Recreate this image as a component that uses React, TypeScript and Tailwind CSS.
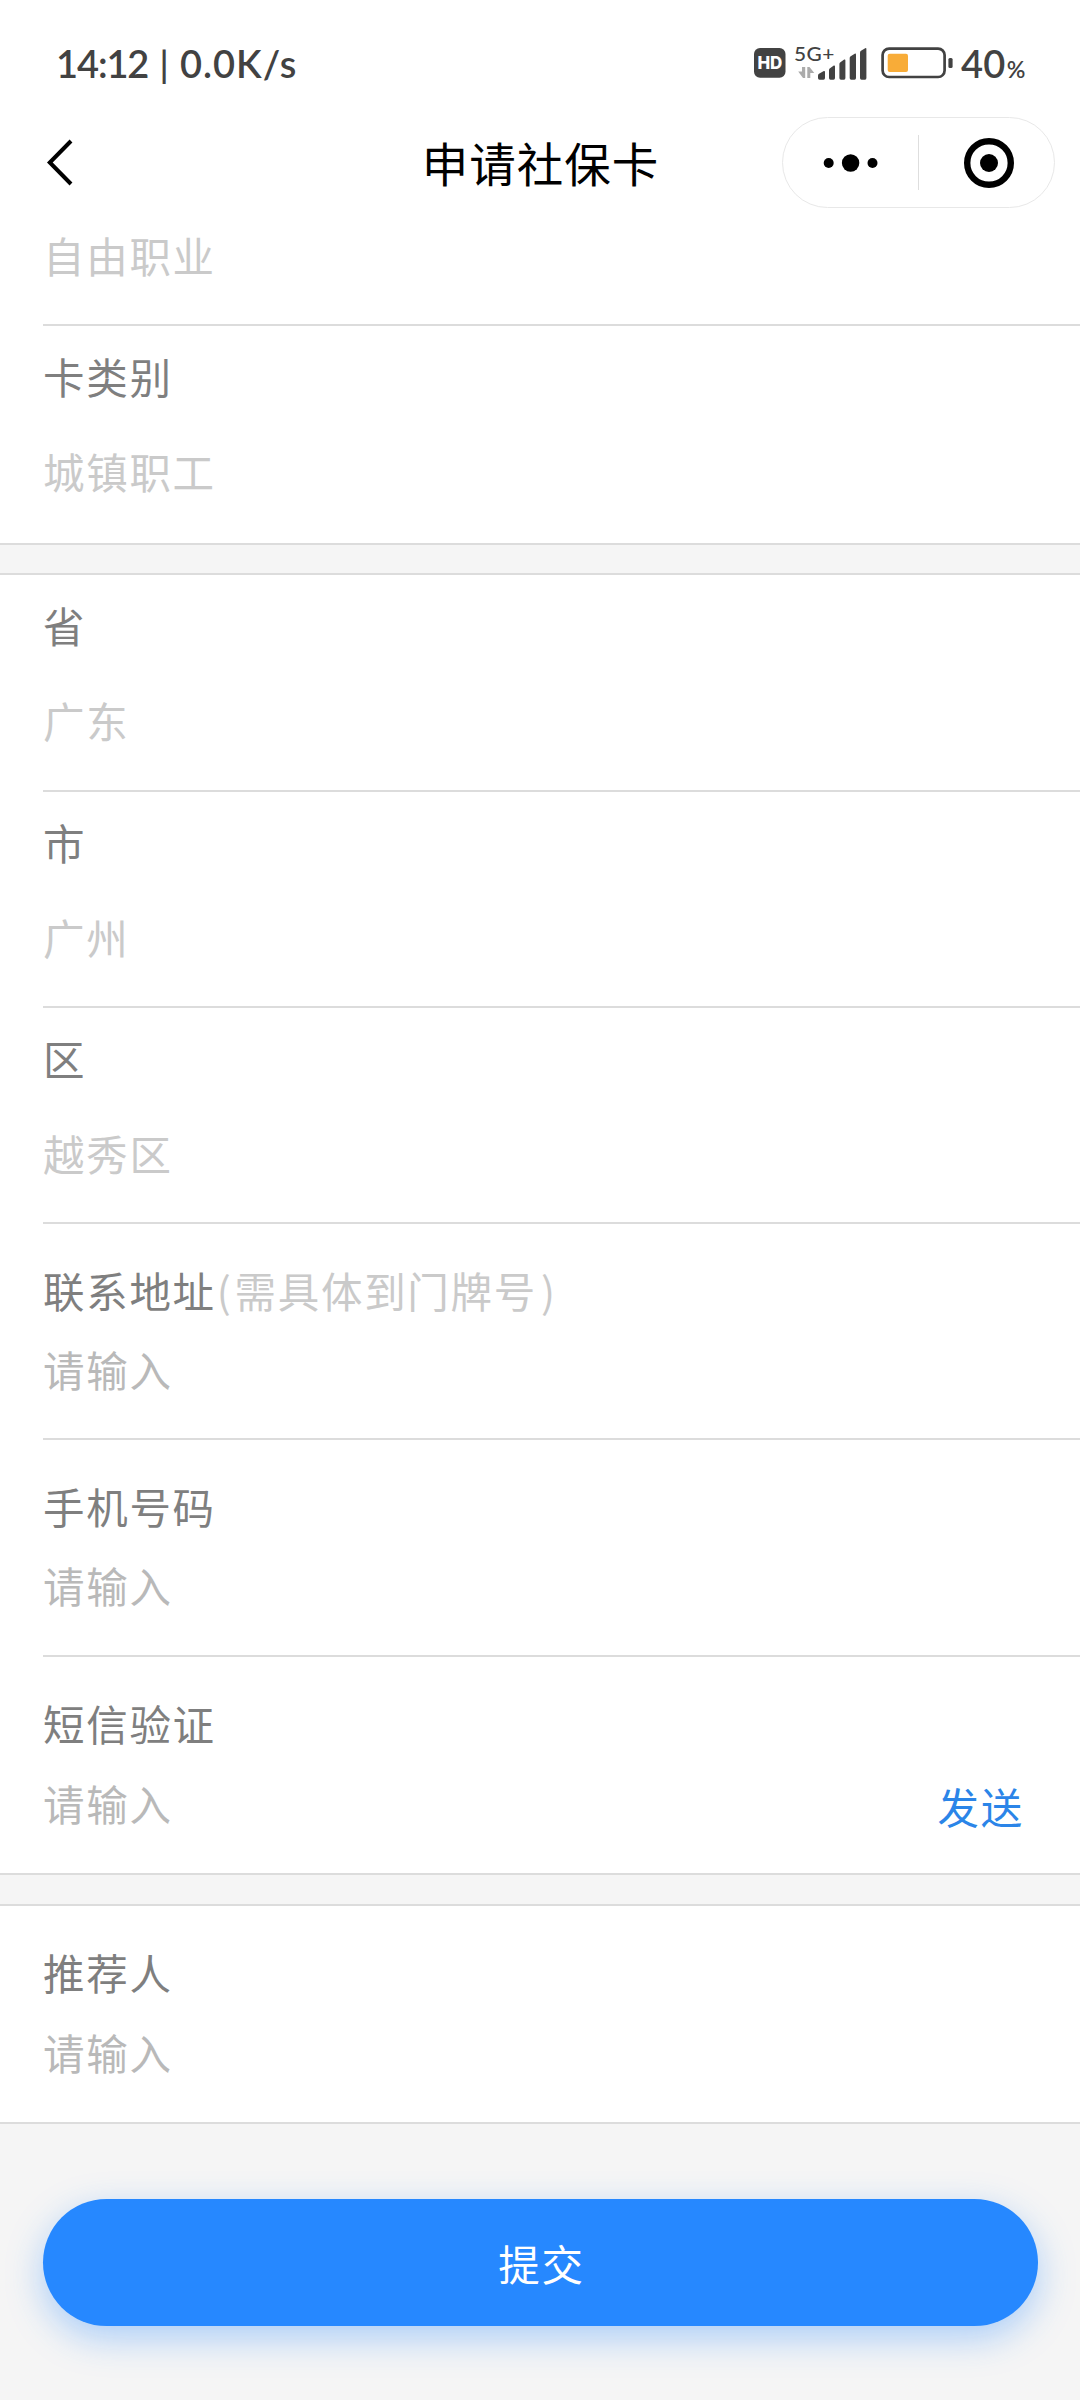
type Field = {
  label: string;
  hint?: string;
  value?: string;
  action?: string;
  height: string;
};

const CARD_FIELDS: Field[] = [{ label: "卡类别", value: "城镇职工", height: "h-[217px]" }];

const ADDRESS_FIELDS: Field[] = [
  { label: "省", value: "广东", height: "h-[215px]" },
  { label: "市", value: "广州", height: "h-[214px]" },
  { label: "区", value: "越秀区", height: "h-[214px]" },
  { label: "联系地址", hint: "需具体到门牌号", height: "h-[214px]" },
  { label: "手机号码", height: "h-[215px]" },
  { label: "短信验证", action: "发送", height: "h-[216px]" },
];

const REFERRER_FIELDS: Field[] = [{ label: "推荐人", height: "h-[216px]" }];

function StatusIcons() {
  return (
    <svg width="204" height="40" viewBox="750 42 204 40" className="block">
      {/* HD */}
      <rect x="754" y="48" width="31.5" height="29.7" rx="6" fill="#424242" />
      <text x="757.4" y="69.4" fontSize="17.5" fontWeight="800" fill="#fff" fontFamily="Inter, sans-serif" letterSpacing="0" textLength="25" lengthAdjust="spacingAndGlyphs">HD</text>

      {/* network */}
      <text x="794" y="60.5" fontSize="20" fontWeight="500" fill="#424242" fontFamily="Lato, sans-serif" letterSpacing="0.5" textLength="41" lengthAdjust="spacingAndGlyphs">5G+</text>
      <g fill="#ababab">
        <path d="M802 67h3.2v11h-2.2l-4.8-6.5h3.8z" />
        <path d="M807.3 78h3v-5h4l-4.8-6h-2.2z" />
      </g>
      <g fill="#424242">
        <path d="M818 75.5Q818 74.5 819 73.8L823.8 71Q825 70.5 825 72V78Q825 79.7 823.5 79.7H819.5Q818 79.7 818 78Z" />
        <path d="M829 70Q829 69 830 68.3L833.8 65.5Q835 65 835 66.5V78Q835 79.7 833.5 79.7H830.5Q829 79.7 829 78Z" />
        <path d="M839.4 64Q839.4 63 840.4 62.3L844.2 59.6Q845.4 59 845.4 60.5V78Q845.4 79.7 844 79.7H841Q839.4 79.7 839.4 78Z" />
        <path d="M849.7 58Q849.7 57 850.7 56.3L854.7 53.7Q856 53 856 54.5V78Q856 79.7 854.5 79.7H851.2Q849.7 79.7 849.7 78Z" />
        <path d="M860 52.5Q860 51.5 861 50.7L865.2 48.2Q866.4 47.7 866.4 49V78Q866.4 79.7 865 79.7H861.5Q860 79.7 860 78Z" />
      </g>

      {/* battery */}
      <rect x="882.6" y="48.6" width="62" height="28.4" rx="6.5" fill="none" stroke="#424242" strokeWidth="2.7" />
      <rect x="887.7" y="53.8" width="20.3" height="18.2" rx="2" fill="#f8ac38" />
      <rect x="948.4" y="58" width="4.2" height="10" rx="1.5" fill="#424242" />
    </svg>
  );
}

function StatusBar() {
  return (
    <div className="flex h-[115px] items-start justify-between pl-[56px] pr-[54px] pt-[42px] font-['Lato',sans-serif] text-[#424242]">
      <div className="flex items-baseline text-[38px] font-semibold leading-[43px]">
        <span className="w-[99px] tracking-[-1.1px]">14:12</span>
        <span className="w-[18px] text-center text-[36px] tracking-normal">|</span>
        <span className="ml-[7px] tracking-[1px]">0.0K/s</span>
      </div>
      <div className="flex items-start">
        <StatusIcons />
        <div className="flex w-[72px] items-baseline pl-[7px] leading-[43px]">
          <span className="text-[38px] font-semibold tracking-[0.3px]">40</span>
          <span className="ml-[1px] text-[23px] font-semibold tracking-normal">%</span>
        </div>
      </div>
    </div>
  );
}

function NavBar() {
  return (
    <header className="grid h-[92px] grid-cols-[400px_280px_400px] items-start">
      <svg width="80" height="92" viewBox="0 115 80 92" className="block">
        <path d="M71 141 49.8 162.5 71 184" fill="none" stroke="#000" strokeWidth="4" />
      </svg>
      <h1 className="pt-[17px] pl-[1px] text-center text-[46.5px] font-normal leading-[60px] tracking-[1px] whitespace-nowrap text-black">申请社保卡</h1>
      <div className="mt-[2px] ml-[102px] flex h-[91px] w-[273px] items-center rounded-full border border-[#e8e8e8]">
        <svg width="135" height="60" viewBox="0 0 135 60">
          <circle cx="45.7" cy="30" r="5" />
          <circle cx="67.6" cy="30" r="8.7" />
          <circle cx="89.5" cy="30" r="5" />
        </svg>
        <div className="h-[55px] w-px bg-[#dedede]" />
        <svg width="135" height="60" viewBox="0 0 135 60">
          <circle cx="70" cy="30" r="21.8" fill="none" stroke="#000" strokeWidth="6.4" />
          <circle cx="70" cy="30" r="9" />
        </svg>
      </div>
    </header>
  );
}

function FieldRow({ field, last }: { field: Field; last: boolean }) {
  return (
    <div className={last ? "" : "ml-[43px] border-b-2 border-[#dcdcdc]"}>
      <div className={`flex flex-col leading-[60px] ${field.height} ${last ? "pl-[43px]" : ""} ${field.value ? "gap-[35px] pt-[20px]" : last ? "gap-[20px] pt-[36px]" : "gap-[19px] pt-[36px]"}`}>
        <div className="text-[#7f7f7f]">
          {field.label}
          {field.hint && (
            <span className="text-[#cacaca]">
              <span className="ml-[1px] mr-[2px]">(</span>
              {field.hint}
              <span className="ml-[4px]">)</span>
            </span>
          )}
        </div>
        <div className="flex justify-between pr-[56px]">
          {field.value ? (
            <span className="text-[#cacaca]">{field.value}</span>
          ) : (
            <span className="text-[#b9b9b9]">请输入</span>
          )}
          {field.action && <button className="pt-[3px] leading-[60px] text-[#2b85e8]">{field.action}</button>}
        </div>
      </div>
    </div>
  );
}

function FieldGroup({ fields }: { fields: Field[] }) {
  return (
    <section className="border-b-2 border-[#dcdcdc] bg-white">
      {fields.map((f, i) => (
        <FieldRow key={f.label} field={f} last={i === fields.length - 1} />
      ))}
    </section>
  );
}

export default function App() {
  return (
    <div className="h-[2400px] w-[1080px] overflow-hidden bg-[#f5f5f5] font-['Noto_Sans_CJK_SC',sans-serif] text-[41.5px] tracking-[1.7px]">
      <div className="bg-white">
        <StatusBar />
        <NavBar />
        {/* tail of the occupation field, scrolled under the header */}
        <div className="ml-[43px] h-[119px] border-b-2 border-[#dcdcdc] pt-[18px] leading-[60px] text-[#cacaca]">自由职业</div>
      </div>
      <FieldGroup fields={CARD_FIELDS} />
      <div className="h-[30px] border-b-2 border-[#dcdcdc]" />
      <FieldGroup fields={ADDRESS_FIELDS} />
      <div className="h-[31px] border-b-2 border-[#dcdcdc]" />
      <FieldGroup fields={REFERRER_FIELDS} />
      <div className="pl-[43px] pr-[42px] pt-[75px]">
        <button className="block h-[127px] w-full rounded-full bg-[#2688ff] pt-[2px] pl-[2px] text-center leading-[125px] text-white shadow-[0_12px_36px_rgba(38,136,255,0.36)]">提交</button>
      </div>
    </div>
  );
}
